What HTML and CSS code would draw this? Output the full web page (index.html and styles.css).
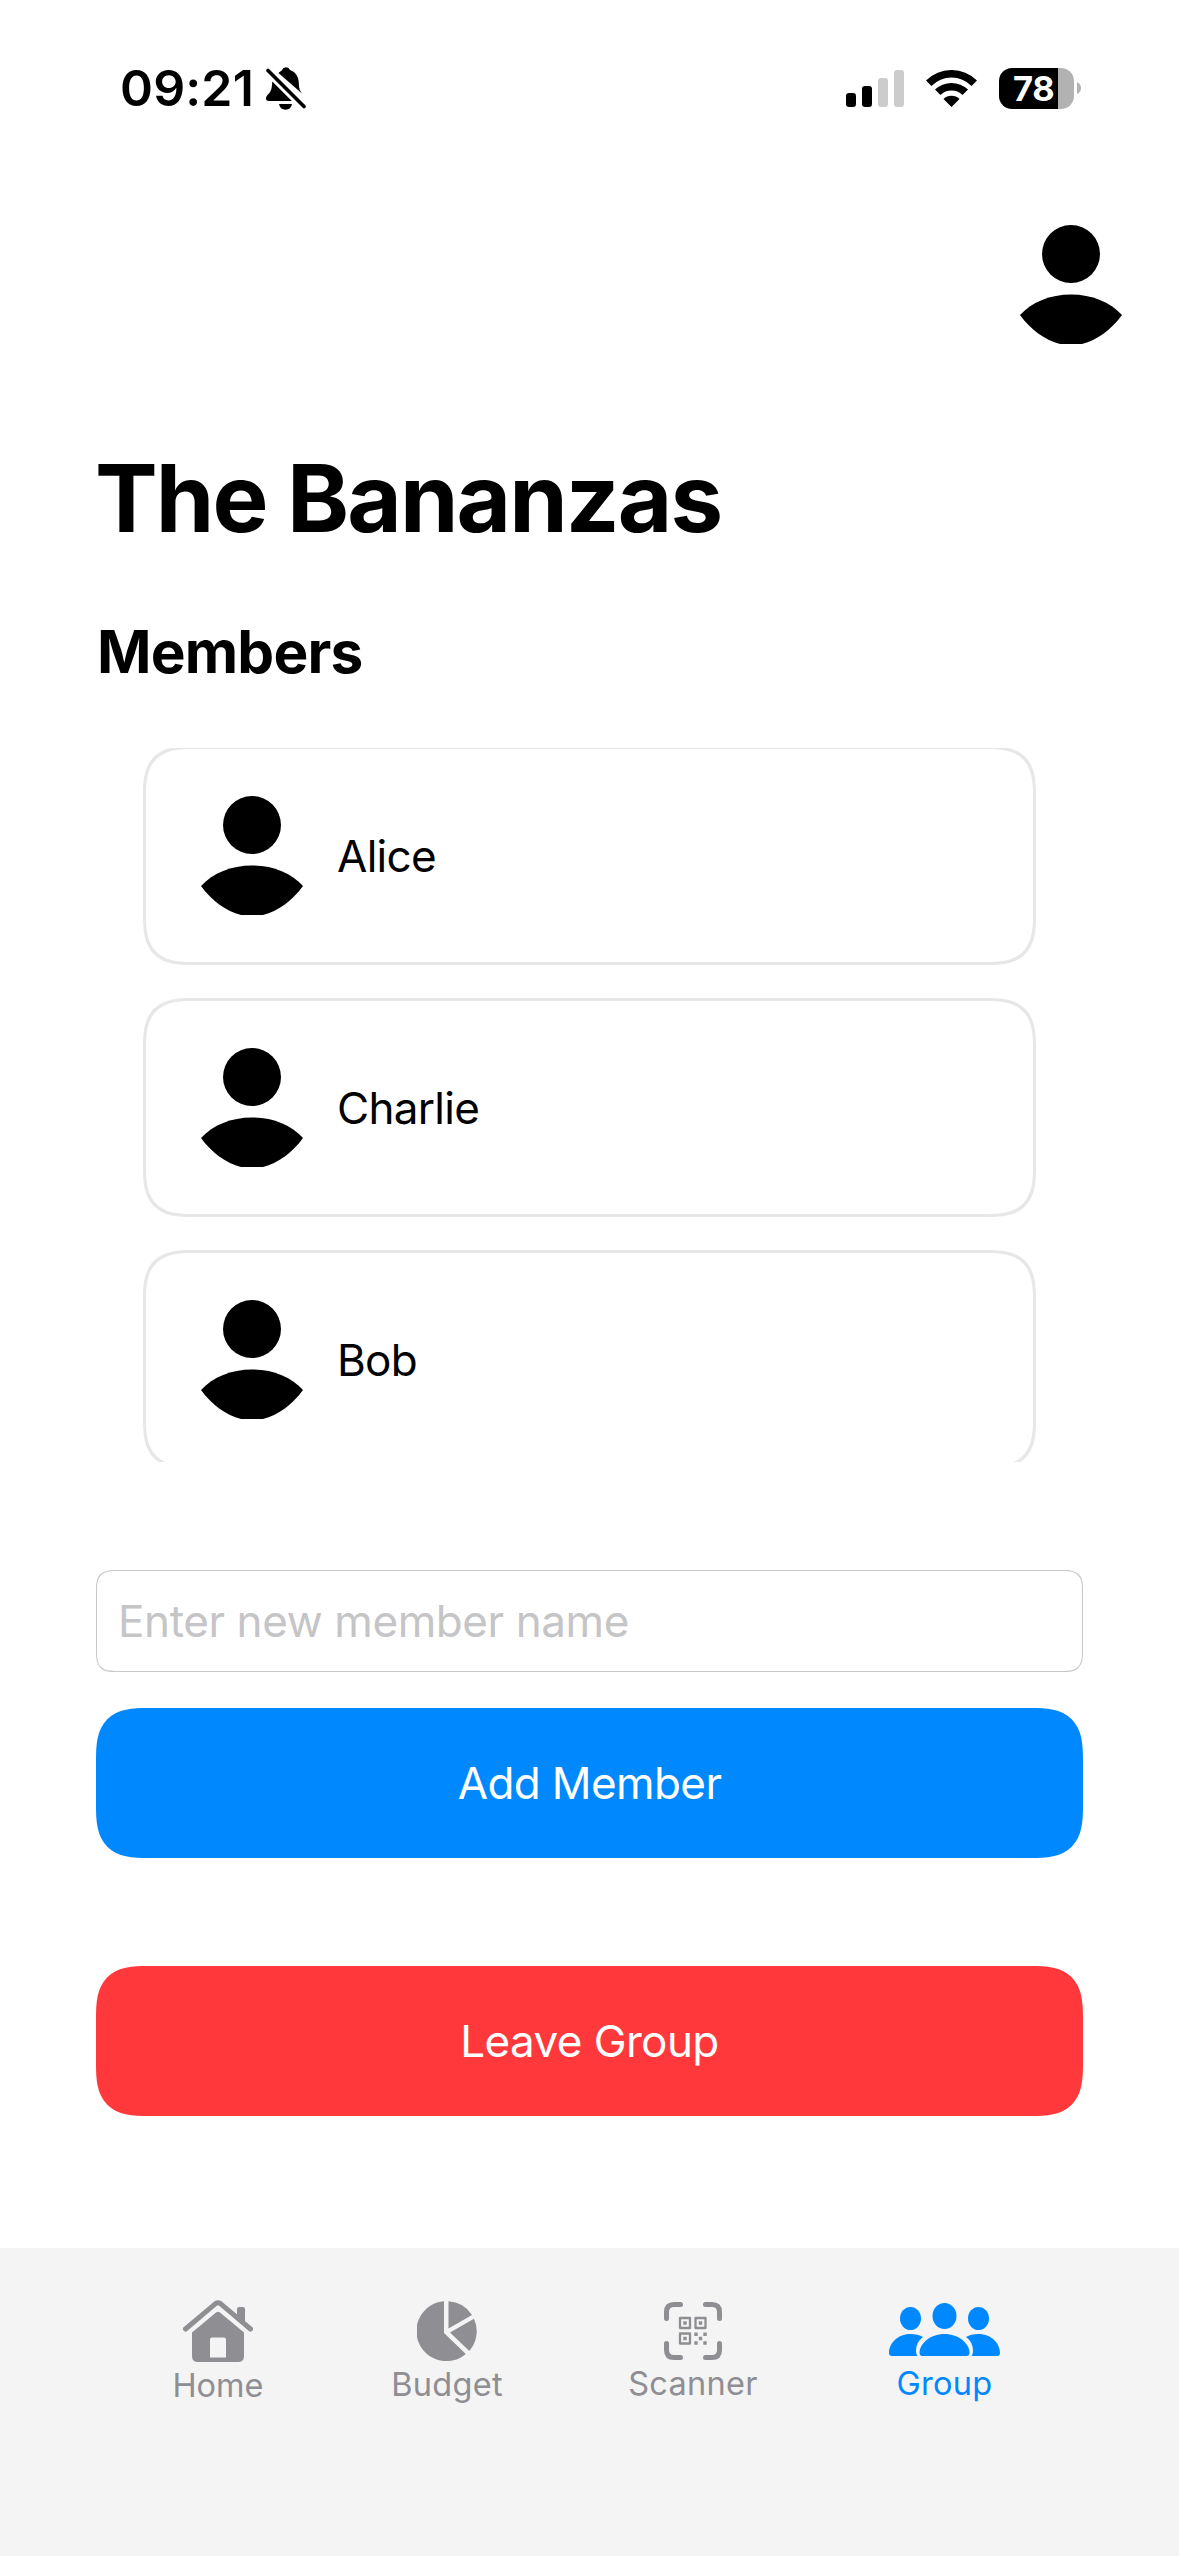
FILE: index.html
```html
<!DOCTYPE html>
<html lang="en">
<head>
<meta charset="utf-8">
<title>The Bananzas</title>
<link rel="stylesheet" href="styles.css">
</head>
<body>
<svg class="defs" aria-hidden="true">
  <symbol id="person" viewBox="0 0 102 122">
    <circle cx="51" cy="30" r="29"/>
    <path d="M0 91C12 78 30 70.500 51 70.500S90 78 102 91C91 106 77 116 62 120H40C25 116 11 106 0 91Z"/>
  </symbol>
</svg>
<div class="screen">
  <header class="status">
    <span class="time">09:21</span>
    <svg class="bell" viewBox="0 0 40 43">
      <path d="M12.500 6C14 4.500 15.500 4 16 3Q17 .3 20 .3T24 3C30 5 32.600 10 32.800 16C33 22 34 24 36.500 27Z"/>
      <path d="M6.300 14.500L25.800 34H3Q0 34 0 31.500C0 29 1.500 28 3 26.500C5.500 24 6 20 6.300 14.500ZM13 37H26Q25 42.700 19.500 42.700T13 37Z"/>
      <path class="slash" d="M2 3.500L38 39.500"/>
    </svg>
    <svg class="signal" viewBox="0 0 58 37">
      <rect y="23" width="10" height="14" rx="3"/><rect x="16" y="16" width="10" height="21" rx="3"/>
      <rect class="dim" x="32" y="8" width="10" height="29" rx="3"/><rect class="dim" x="48" width="10" height="37" rx="3"/>
    </svg>
    <svg class="wifi" viewBox="0 0 51 37">
      <path d="M0 10.500A36.200 36.200 0 0 1 51 10.500L45.500 16A28 28 0 0 0 5.500 16Z"/>
      <path d="M9 19.500A24 24 0 0 1 42 19.500L36.500 25A16 16 0 0 0 14.500 25Z"/>
      <path d="M17.500 29A11.500 11.500 0 0 1 33.500 29L25.500 37Z"/>
    </svg>
    <div class="battery"><span>78</span></div>
    <svg class="nub" viewBox="0 0 4 12"><path d="M0 0Q4 2 4 6T0 12Z"/></svg>
  </header>
  <div class="topbar"><svg class="person"><use href="#person"/></svg></div>
  <main>
    <h1>The Bananzas</h1>
    <h2>Members</h2>
    <ul class="members">
      <li><svg class="person"><use href="#person"/></svg><span>Alice</span></li>
      <li><svg class="person"><use href="#person"/></svg><span>Charlie</span></li>
      <li><svg class="person"><use href="#person"/></svg><span>Bob</span></li>
    </ul>
    <input class="field" type="text" placeholder="Enter new member name">
    <button class="btn add">Add Member</button>
    <button class="btn leave">Leave Group</button>
  </main>
  <nav>
    <a class="home">
      <svg viewBox="0 0 70 62">
        <path class="roof" d="M2.500 29L32.500 3.600Q35 1.800 37.500 3.600L67.500 29"/>
        <path d="M54 17V9Q54 7 56 7H60Q62 7 62 9V24Z"/>
        <path fill-rule="evenodd" d="M33 12.500Q35 11 37 12.500L61 32.500V56Q61 62 55 62H15Q9 62 9 56V32.500ZM29 37.500Q27 37.500 27 39.500V57.500H43V39.500Q43 37.500 41 37.500Z"/>
      </svg>
      <span>Home</span>
    </a>
    <a class="budget">
      <svg viewBox="0 0 60 60">
        <path d="M27 .2V32L48.800 53A30 30 0 1 1 27 .2Z"/>
        <path d="M31.500 .2A30 30 0 0 1 55 14L31.500 27.500Z"/>
        <path d="M57 17.700A30 30 0 0 1 52.300 49.900L33 31.500Z"/>
      </svg>
      <span>Budget</span>
    </a>
    <a class="scanner">
      <svg viewBox="0 0 58 58">
        <path class="frame" d="M2.500 16.500V10Q2.500 2.500 10 2.500H16.500M41.500 2.500H48Q55.500 2.500 55.500 10V16.500M55.500 41.500V48Q55.500 55.500 48 55.500H41.500M16.500 55.500H10Q2.500 55.500 2.500 48V41.500"/>
        <path class="code" d="M16 16H26V26H16ZM31.500 16H41.500V26H31.500ZM16 31.500H26V41.500H16Z"/>
        <path d="M19.300 19.300h3.400v3.400h-3.400zM34.800 19.300h3.400v3.400h-3.400zM19.300 34.800h3.400v3.400h-3.400zM30.300 30.500h3.400v3.400h-3.400zM39.300 30.500h3.400v3.400h-3.400zM34.800 34.800h3.400v3.400h-3.400zM30.300 39.300h3.400v3.400h-3.400zM39.300 39.300h3.400v3.400h-3.400z"/>
      </svg>
      <span>Scanner</span>
    </a>
    <a class="group">
      <svg viewBox="0 0 111 53">
        <ellipse cx="21.500" cy="15.500" rx="10.500" ry="11.500"/><ellipse cx="55.500" cy="13" rx="12" ry="13"/><ellipse cx="89.500" cy="15.500" rx="10.500" ry="11.500"/>
        <path d="M34 34Q27 39 27 48Q27 51 28.500 53H3Q0 53 0 50C0 41 8 31 21.500 31Q29 31 34 34Z"/>
        <path d="M77 34Q84 39 84 48Q84 51 82.500 53H108Q111 53 111 50C111 41 103 31 89.500 31Q82 31 77 34Z"/>
        <path d="M33.500 53Q30.500 53 30.500 49.500C30.500 41 41 31 55.500 31S80.500 41 80.500 49.500Q80.500 53 77.500 53Z"/>
      </svg>
      <span>Group</span>
    </a>
  </nav>
</div>
</body>
</html>
```
FILE: styles.css
```css
* { box-sizing: border-box; }
body { margin: 0; background: #fff; font-family: Inter, "Liberation Sans", sans-serif; color: #000; }
.defs { display: none; }
svg { display: block; flex: none; }
.screen { width: 1179px; height: 2556px; display: flex; flex-direction: column; overflow: hidden; }

.status { height: 176px; padding: 0 98px 0 120px; display: flex; align-items: center; flex: none; }
.time { font-size: 50px; font-weight: 600; line-height: 60px; width: 146px; white-space: nowrap; letter-spacing: .15px; }
.bell { width: 40px; height: 43px; }
.slash { stroke: #000; stroke-width: 3.6; stroke-linecap: round; }
.signal { width: 58px; height: 37px; margin-left: auto; }
.dim { fill: #ccc; }
.wifi { width: 51px; height: 37px; margin-left: 22px; }
.battery { width: 75px; height: 41px; margin-left: 22px; border-radius: 13px; background: linear-gradient(90deg, #000 59px, #b2b2b2 59px); }
.battery span { display: block; width: 59px; padding-left: 14px; font-size: 34.5px; font-weight: 700; line-height: 42px; letter-spacing: -.3px; color: #fff; }
.nub { width: 4px; height: 12px; margin-left: 3px; fill: #b2b2b2; }

.topbar { height: 232px; padding: 48px 57px 0; display: flex; justify-content: flex-end; flex: none; }
.person { width: 102px; height: 122px; }

main { padding: 0 96px; height: 1840px; display: flex; flex-direction: column; flex: none; }
h1 { margin: 35px 0 0 -1px; font-size: 94px; line-height: 110px; font-weight: 700; letter-spacing: -1.9px; }
h2 { margin: 64px 0 0 1px; font-size: 58.5px; line-height: 70px; font-weight: 700; letter-spacing: -.8px; }
.members { list-style: none; margin: 61px 0 0; padding: 0 47px; height: 714px; overflow: hidden; display: flex; flex-direction: column; gap: 33px; flex: none; }
.members li { height: 219px; flex: none; border: 3px solid #e7e7e7; border-radius: 36px; display: flex; align-items: center; gap: 34px; padding-left: 55px; font-size: 44px; line-height: 60px; letter-spacing: -.7px; }
.members li:first-child { margin-top: -2px; }
.field { margin: 108px 0 0; height: 102px; padding: 0 21px; border: 1px solid #c8c8ca; border-radius: 15px; font: 44px Inter, sans-serif; letter-spacing: -.4px; flex: none; }
.field::placeholder { color: #c5c5c7; }
.btn { height: 150px; border: 0; border-radius: 37px; color: #fff; font: 44px Inter, sans-serif; letter-spacing: -.6px; flex: none; padding: 0; }
.add { margin-top: 36px; background: #08f; }
.leave { margin-top: 108px; background: #ff383c; }

@supports (corner-shape: superellipse(1.5)) {
  .members li, .btn, .field { corner-shape: superellipse(1.5); }
  .members li { border-radius: 50px; }
  .btn { border-radius: 52px; }
  .field { border-radius: 20px; }
}

nav { height: 308px; background: #f4f4f4; color: #8e8e93; fill: currentColor; display: flex; padding: 52px 99px 0; flex: none; }
nav a { display: flex; flex-direction: column; align-items: center; font-size: 32.5px; line-height: 40px; letter-spacing: .3px; gap: 4px; }
.roof { fill: none; stroke: currentColor; stroke-width: 5; stroke-linecap: round; }
.frame { fill: none; stroke: currentColor; stroke-width: 5; stroke-linecap: round; }
.code { fill: none; stroke: currentColor; stroke-width: 2.3; stroke-linejoin: round; }
.home { width: 238px; letter-spacing: 0; }
.home svg { width: 70px; height: 62px; }
.budget { width: 220px; padding-top: 1px; }
.budget svg { width: 60px; height: 60px; }
.scanner { width: 272px; padding-top: 2px; }
.scanner svg { width: 58px; height: 58px; }
.group { width: 231px; padding-top: 3px; color: #08f; gap: 8px; }
.group svg { width: 111px; height: 53px; }
```
